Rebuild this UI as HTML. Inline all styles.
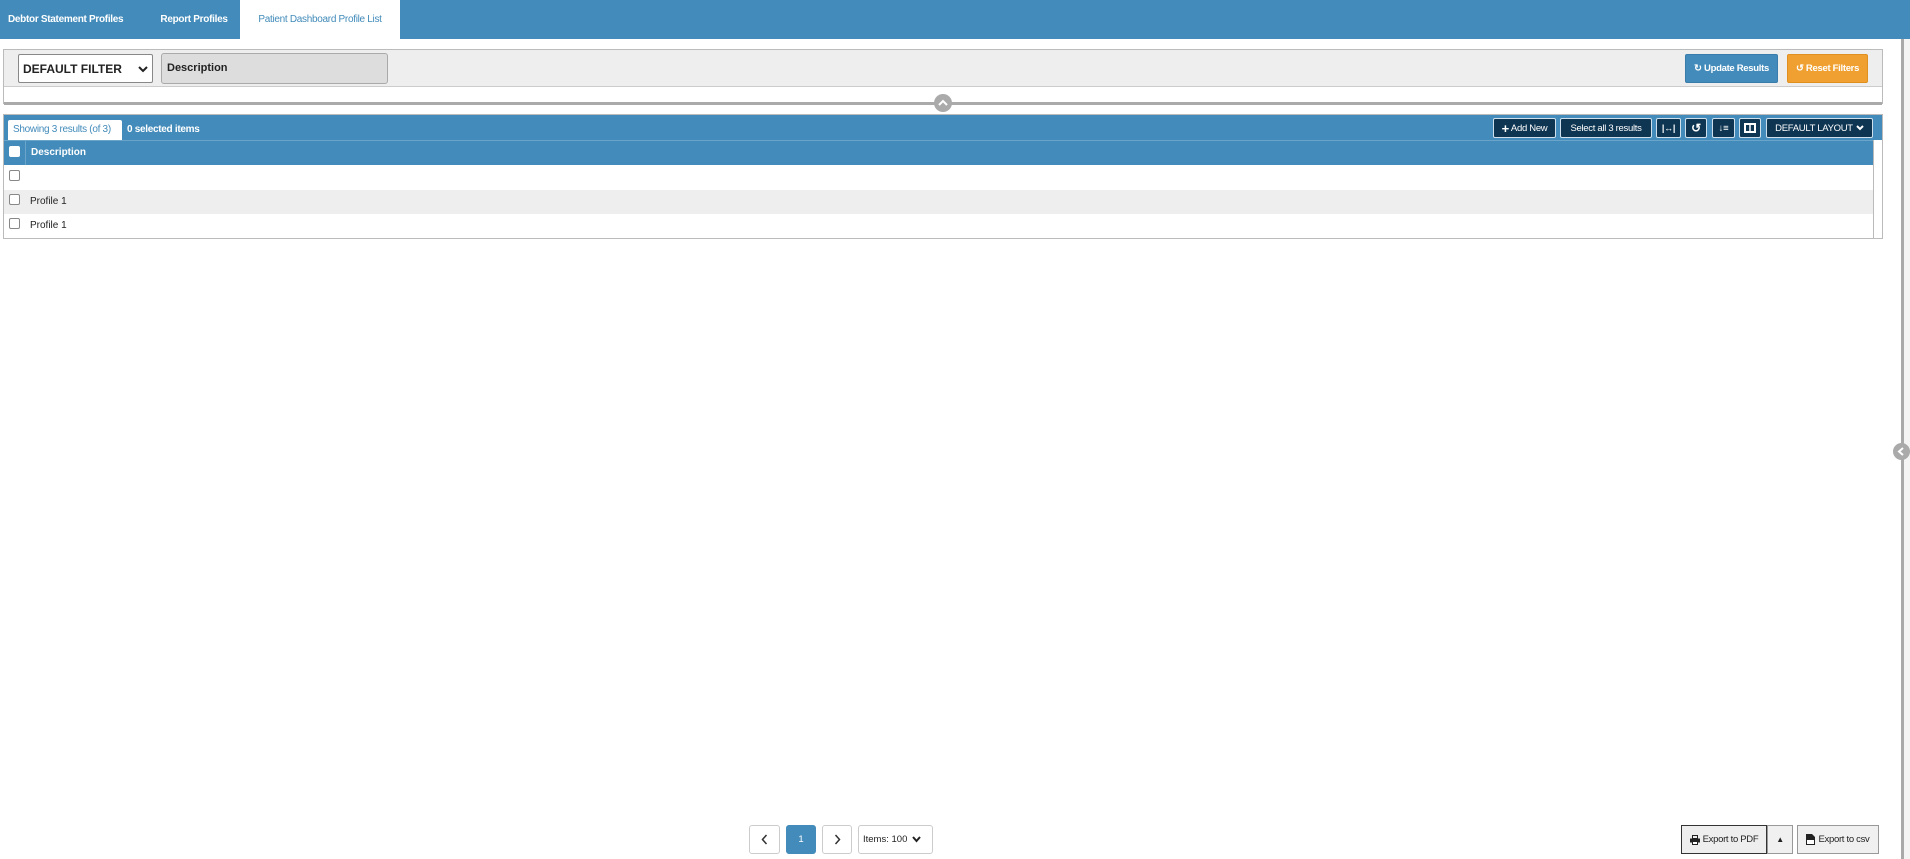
<!DOCTYPE html>
<html><head><meta charset="utf-8">
<style>
*{box-sizing:border-box;margin:0;padding:0}
body{width:1910px;height:859px;overflow:hidden;background:#fff;font-family:"Liberation Sans",sans-serif;font-size:11px;color:#222;position:relative}
.abs{position:absolute}
.tabs{left:0;top:0;width:1910px;height:39px;background:#428bba}
.tab{top:0;height:39px;line-height:40px;font-size:10px;font-weight:bold;color:#fff;letter-spacing:-0.3px}
.tab.act{background:#fff;color:#428bba;font-weight:normal}
.panel{left:3px;top:49px;width:1880px;height:55px;border:1px solid #bbb;border-bottom:none;background:#fff}
.panelTop{left:4px;top:50px;width:1878px;height:37px;background:#eee;border-bottom:1px solid #ccc}
.sel{left:18px;top:54px;width:135px;height:29px;border:1px solid #888;background:#fff;border-radius:2px;font-weight:bold;font-size:12px;line-height:28px;padding-left:4px;color:#222}
.desc{left:161px;top:53px;width:227px;height:31px;border:1px solid #aaa;background:#ddd;border-radius:3px;font-weight:bold;font-size:11px;line-height:28px;padding-left:5px}
.btn{color:#fff;font-weight:bold;font-size:9.5px;text-align:center;border-radius:2px;letter-spacing:-0.3px}
.grid{left:3px;top:114px;width:1880px;height:125px;border:1px solid #bbb}
.tb{left:4px;top:115px;width:1878px;height:25px;background:#428bba}
.gh{left:4px;top:140px;width:1869px;height:25px;background:#428bba;border-top:1px solid #6aa4c8}
.cb{width:11px;height:11px;border:1px solid #888;border-radius:2px;background:#fff}
.tbb{top:118px;height:20px;background:#0e3552;border:1px solid #cfe0ec;border-radius:2px;color:#fff;font-size:9.5px;display:flex;align-items:center;justify-content:center;letter-spacing:-0.3px}
.pg{top:825px;height:29px;border:1px solid #ccc;border-radius:3px;background:#fff;font-size:9.5px;display:flex;align-items:center;justify-content:center}
.ex{top:825px;height:29px;border:1px solid #999;background:#f0f0f0;font-size:9.5px;display:flex;align-items:center;justify-content:center;letter-spacing:-0.3px}
</style></head><body>
<div class="abs tabs"></div>
<div class="abs tab" style="left:0;width:140px;padding-left:8px">Debtor Statement Profiles</div>
<div class="abs tab" style="left:140px;width:100px;text-align:center;padding-left:8px">Report Profiles</div>
<div class="abs tab act" style="left:240px;width:160px;text-align:center">Patient Dashboard Profile List</div>

<div class="abs panel"></div>
<div class="abs panelTop"></div>
<div class="abs sel">DEFAULT FILTER<svg class="abs" style="right:4px;top:10px" width="10" height="8" viewBox="0 0 10 8"><path d="M1 2l4 4 4-4" stroke="#222" stroke-width="2" fill="none"/></svg></div>
<div class="abs desc">Description</div>
<div class="abs btn" style="left:1685px;top:54px;width:93px;height:29px;background:#428bba;border:1px solid #3a7daa;line-height:27px">&#x21bb; Update Results</div>
<div class="abs btn" style="left:1787px;top:54px;width:81px;height:29px;background:#f0a030;border:1px solid #e09020;line-height:27px">&#x21ba; Reset Filters</div>
<div class="abs" style="left:4px;top:102px;width:1878px;height:3px;background:#aaa"></div>
<div class="abs" style="left:934px;top:94px;width:18px;height:18px;border-radius:50%;background:#aaa"><svg class="abs" style="left:4px;top:5px" width="10" height="8" viewBox="0 0 10 8"><path d="M1 6l4-4 4 4" stroke="#fff" stroke-width="2" fill="none"/></svg></div>

<div class="abs grid"></div>
<div class="abs tb"></div>
<div class="abs" style="left:8px;top:120px;width:114px;height:20px;background:#fff;border-radius:2px 2px 0 0;color:#428bba;font-size:10px;line-height:20px;padding-left:5px;letter-spacing:-0.3px">Showing 3 results (of 3)</div>
<div class="abs" style="left:127px;top:120px;color:#fff;font-weight:bold;font-size:10px;line-height:20px;letter-spacing:-0.3px">0 selected items</div>
<div class="abs tbb" style="left:1493px;width:63px"><b style="font-size:13px;margin-right:2px">+</b>Add New</div>
<div class="abs tbb" style="left:1560px;width:92px">Select all 3 results</div>
<div class="abs tbb" style="left:1656px;width:25px;font-weight:bold;font-size:9px">|↔|</div>
<div class="abs tbb" style="left:1685px;width:22px;font-weight:bold;font-size:12px">↺</div>
<div class="abs tbb" style="left:1712px;width:23px;font-weight:bold">↓≡</div>
<div class="abs tbb" style="left:1739px;width:22px"><svg width="12" height="10" viewBox="0 0 12 10"><rect x="1" y="1" width="10" height="8" stroke="#fff" stroke-width="2" fill="none"/><path d="M6 1v8" stroke="#fff" stroke-width="1.5"/></svg></div>
<div class="abs tbb" style="left:1766px;width:107px">DEFAULT LAYOUT <svg style="margin-left:3px" width="8" height="6" viewBox="0 0 8 6"><path d="M1 1l3 3 3-3" stroke="#fff" stroke-width="2" fill="none"/></svg></div>
<div class="abs gh"></div>
<div class="abs" style="left:25px;top:140px;width:1px;height:25px;background:#6aa4c8"></div>
<div class="abs cb" style="left:9px;top:146px;border-color:#fff"></div>
<div class="abs" style="left:31px;top:140px;color:#fff;font-weight:bold;font-size:10px;line-height:26px">Description</div>
<div class="abs" style="left:1873px;top:140px;width:1px;height:98px;background:#bbb"></div>
<div class="abs cb" style="left:9px;top:170px"></div>
<div class="abs" style="left:4px;top:190px;width:1869px;height:24px;background:#eee"></div>
<div class="abs cb" style="left:9px;top:194px"></div>
<div class="abs" style="left:30px;top:190px;line-height:24px;font-size:10px">Profile 1</div>
<div class="abs cb" style="left:9px;top:218px"></div>
<div class="abs" style="left:30px;top:214px;line-height:24px;font-size:10px">Profile 1</div>

<div class="abs" style="left:1901px;top:39px;width:3px;height:820px;background:#aaa"></div>
<div class="abs" style="left:1904px;top:39px;width:6px;height:820px;background:#f4f4f4"></div>
<div class="abs" style="left:1893px;top:443px;width:17px;height:17px;border-radius:50%;background:#aaa"><svg class="abs" style="left:4px;top:4px" width="8" height="9" viewBox="0 0 8 9"><path d="M6 1l-4 3.5 4 3.5" stroke="#fff" stroke-width="2" fill="none"/></svg></div>

<div class="abs pg" style="left:749px;width:31px"><svg width="7" height="11" viewBox="0 0 7 11"><path d="M5.5 1l-4 4.5 4 4.5" stroke="#333" stroke-width="1.5" fill="none"/></svg></div>
<div class="abs pg" style="left:786px;width:30px;background:#428bba;border-color:#428bba;color:#fff">1</div>
<div class="abs pg" style="left:822px;width:30px"><svg width="7" height="11" viewBox="0 0 7 11"><path d="M1.5 1l4 4.5-4 4.5" stroke="#333" stroke-width="1.5" fill="none"/></svg></div>
<div class="abs pg" style="left:858px;width:75px;justify-content:flex-start;padding-left:4px">Items: 100 <svg style="margin-left:5px" width="9" height="7" viewBox="0 0 9 7"><path d="M1 1l3.5 4 3.5-4" stroke="#222" stroke-width="2" fill="none"/></svg></div>
<div class="abs ex" style="left:1681px;width:86px;border-color:#333;background:#eee"><svg style="margin-right:3px" width="10" height="10" viewBox="0 0 10 10"><rect x="2.5" y="0.5" width="5" height="3" fill="none" stroke="#222"/><rect x="0" y="3.5" width="10" height="4" fill="#222"/><rect x="2.5" y="6.5" width="5" height="3" fill="#fff" stroke="#222"/></svg>Export to PDF</div>
<div class="abs ex" style="left:1767px;width:26px;font-size:8px">&#x25B2;</div>
<div class="abs ex" style="left:1797px;width:82px"><svg style="margin-right:3px" width="9" height="11" viewBox="0 0 9 11"><path d="M0 0h6l3 3v8H0z" fill="#222"/><rect x="1" y="6" width="7" height="4" fill="#fff"/></svg>Export to csv</div>
</body></html>
